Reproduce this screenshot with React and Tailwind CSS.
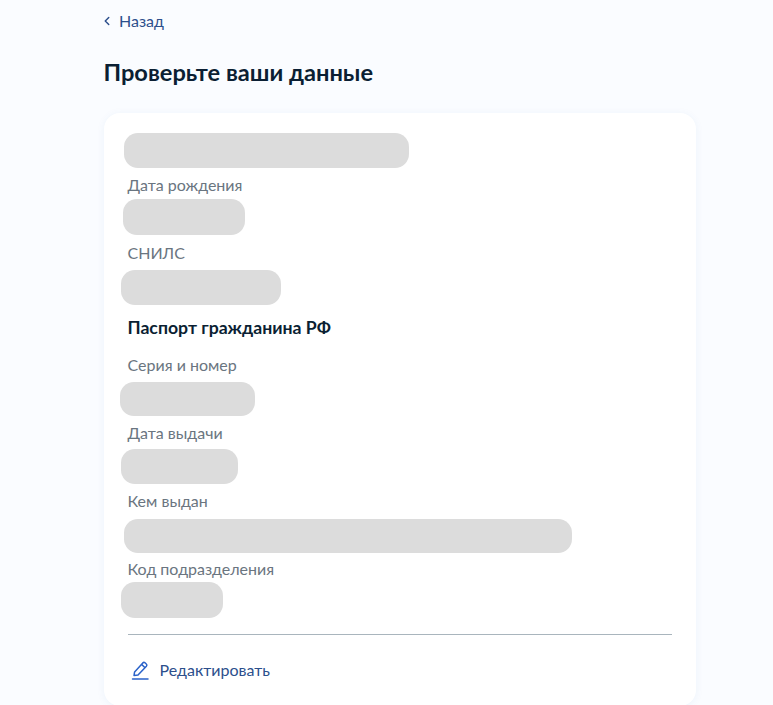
import { ChevronLeft } from "lucide-react";

function Blob({ className }) {
    return <div className={`rounded-[14px] bg-[#dcdcdc] ${className}`} />;
}

function Label({ children, className = "" }) {
    return <p className={`ml-[-0.5px] text-[16px] leading-[20px] text-[#6a7580] ${className}`}>{children}</p>;
}

export default function App() {
    return (
        <div className="h-[705px] overflow-hidden bg-[#fafcff] font-['Lato',sans-serif]">
            <div className="ml-[104px] w-[592px] pt-[11px]">
                <a className="flex h-[20px] items-center text-[16px] leading-[20px] text-[#2c4f8c]">
                    <ChevronLeft className="ml-[-4px] h-[14px] w-[14px]" strokeWidth={2.5} />
                    <span className="ml-[5px]">Назад</span>
                </a>
                <h1 className="ml-[-0.5px] mt-[25px] text-[23.65px] leading-[32px] font-bold text-[#0b1f33]">Проверьте ваши данные</h1>

                <div className="mt-[25px] h-[593px] rounded-[16px] bg-white px-[24px] pt-[20px] shadow-[0_1px_8px_rgba(39,108,190,0.06)]">
                    <Blob className="ml-[-4px] h-[35px] w-[285px]" />
                    <Label className="mt-[7px]">Дата рождения</Label>
                    <Blob className="ml-[-5px] mt-[4px] h-[36px] w-[122px]" />
                    <Label className="mt-[8px]">СНИЛС</Label>
                    <Blob className="ml-[-7px] mt-[7px] h-[35px] w-[160px]" />
                    <h2 className="ml-[-0.5px] mt-[13px] text-[17.65px] leading-[20px] font-bold text-[#0b1f33]">Паспорт гражданина РФ</h2>
                    <Label className="mt-[17px]">Серия и номер</Label>
                    <Blob className="ml-[-8px] mt-[7px] h-[34px] w-[135px]" />
                    <Label className="mt-[7px]">Дата выдачи</Label>
                    <Blob className="ml-[-7px] mt-[6px] h-[35px] w-[117px]" />
                    <Label className="mt-[7px]">Кем выдан</Label>
                    <Blob className="ml-[-4px] mt-[8px] h-[34px] w-[448px]" />
                    <Label className="mt-[6px]">Код подразделения</Label>
                    <Blob className="ml-[-7px] mt-[3px] h-[36px] w-[102px]" />
                    <div className="mt-[16px] border-t border-[#a9b5bd]" />
                    <a className="mt-[25px] flex h-[20px] items-center text-[16px] leading-[20px] text-[#2c4f8c]">
                        <svg viewBox="0 0 18 20" fill="none" stroke="#2a62c9" strokeWidth="1.5" className="ml-[3px] h-[20px] w-[18px]">
                            <path d="M1.5 19h15.5" strokeLinecap="round" />
                            <path d="M3 15.5l.6-3.6L11.8 2.9c.6-.6 1.5-.7 2.2-.1l1.3 1.2c.7.6.7 1.5.1 2.2L7 15l-4 .5z" strokeLinejoin="round" />
                            <path d="M10.5 4.4l3.6 3.3" />
                        </svg>
                        <span className="ml-[10.5px]">Редактировать</span>
                    </a>
                </div>
            </div>
        </div>
    );
}
